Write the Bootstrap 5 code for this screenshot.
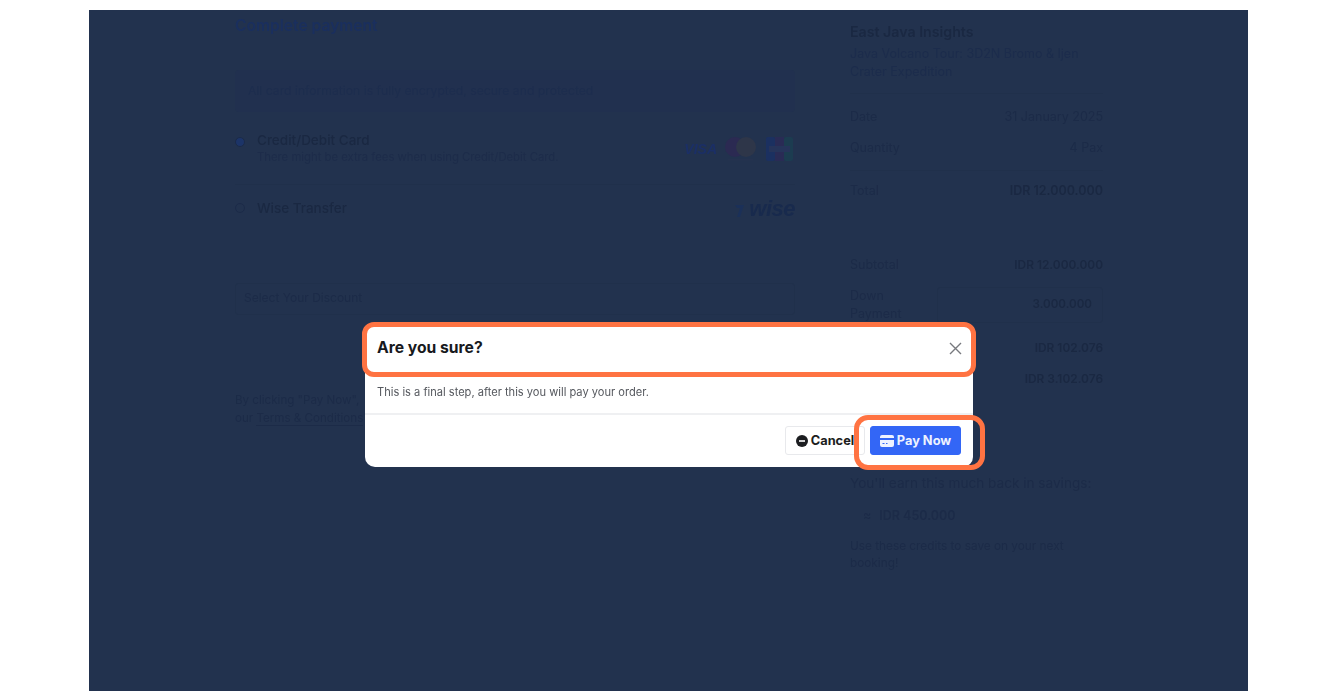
<!DOCTYPE html>
<html lang="en">
<head>
    <meta charset="UTF-8">
    <meta name="viewport" content="width=device-width, initial-scale=1">
    <title>Complete payment</title>
    <link href="https://cdn.jsdelivr.net/npm/bootstrap@5.3.0/dist/css/bootstrap.min.css" rel="stylesheet">
    <style>
        html, body { height: 100%; overflow: hidden; background: #fff; }
        body { font-family: Inter, "Open Sans", sans-serif; }
        .shot-frame {
            position: relative;
            width: 1159px;
            height: 681px;
            margin: 10px 0 0 89px;
            background: #22324e;
            color: #1b2a45;
            padding-left: 146px;
            overflow: hidden;
        }
        .left-col { width: 560px; flex: none; filter: blur(.3px); }
        .right-col { width: 253px; flex: none; margin-left: 55px; font-size: 12.5px; filter: blur(.3px); }
        .pay-title { height: 60px; padding-top: 7px; font-size: 15.6px; font-weight: 600; color: #1a2f5e; line-height: 18px; }
        .secure-note { height: 42px; background: #21304f; border-radius: 4px; padding: 0 13px; font-size: 12.2px; color: #1d2d4e; line-height: 41px; }
        .pay-option { border-bottom: 1px solid #20304b; padding-left: 22px; position: relative; }
        .pay-option.first { height: 73px; padding-top: 19px; }
        .pay-option.second { height: 98px; padding-top: 14px; border-bottom: 0; }
        .pay-dot { position: absolute; left: 0; width: 10px; height: 10px; border-radius: 50%; border: 1px solid #1c2b49; }
        .pay-dot.on { background: #1c3468; top: 25px; }
        .pay-dot.off { top: 18px; }
        .opt-name { font-size: 13.5px; font-weight: 500; line-height: 18px; color: #1a2842; }
        .opt-sub { font-size: 11.3px; line-height: 16px; color: #1d2c4a; }
        .discount-box { height: 32px; border: 1px solid #20304b; border-radius: 3px; padding-left: 8px; font-size: 12px; line-height: 27px; color: #1c2b48; }
        .terms-note { margin-top: 76px; font-size: 11.6px; line-height: 18px; color: #1c2b48; }
        .terms-note span { border-bottom: 1px solid #1c2b48; }
        .card-logos { margin: 6px 2px 0 0; }
        .card-logos svg { flex: none; }
        .visa-text { font-family: "Liberation Sans", sans-serif; font-size: 14px; font-weight: 700; font-style: italic; color: #1b2f66; line-height: 24px; margin-right: 8px; }
        .mc-logo { margin-right: 10px; }
        .wise-text { font-family: "Liberation Sans", sans-serif; font-size: 22px; font-weight: 700; font-style: italic; color: #182a4d; line-height: 20px; letter-spacing: -.5px; }
        .trip-head { padding-top: 13px; height: 84px; border-bottom: 1px solid #20304b; line-height: 18px; color: #1c2c4c; }
        .trip-head div:first-child { font-size: 14.2px; font-weight: 600; line-height: 18px; margin-bottom: 4px; color: #1a2842; }
        .sum-row { line-height: 18px; color: #1c2b48; }
        .sum-row b { font-weight: 600; color: #1a2842; font-size: 11.9px; }
        .date-row { margin-top: 14px; }
        .pay-gap { margin-top: 13px; padding-bottom: 13px; border-bottom: 1px solid #20304b; }
        .total-row { margin-top: 11px; }
        .total-row b { font-size: 12.5px; }
        .subtotal-row { margin-top: 56px; }
        .down-row { margin-top: 13px; height: 36px; }
        .fee-row { margin-top: 16px; }
        .due-row { margin-top: 13px; }
        .down-input { width: 166px; height: 36px; border: 1px solid #20304b; border-radius: 3px; text-align: right; padding: 7px 10px 0 0; flex: none; }
        .down-input b { font-size: 11.6px; }
        .earn-text { color: #1c2b48; line-height: 17px; }
        .earn-top { margin-top: 87px; font-size: 13.6px; white-space: nowrap; }
        .earn-value { margin-top: 15px; padding-left: 13px; }
        .earn-value b { font-weight: 600; }
        .earn-foot { margin-top: 14px; font-size: 11.8px; }
        .confirm-box {
            position: absolute;
            left: 276px;
            top: 316px;
            width: 608px;
            height: 141px;
            border: 0;
            border-radius: 10px;
            background: #fff;
            color: #212529;
            filter: blur(.35px);
        }
        .confirm-box .modal-header { height: 48px; padding: 0 11px 4px 12px; border: 0; }
        .confirm-box .modal-title { font-size: 15.7px; font-weight: 700; color: #17191d; line-height: 20px; }
        .confirm-box .btn-close { display: flex; width: 13px; height: 13px; padding: 0; margin: 0; background: none; opacity: 1; }
        .confirm-box .modal-body { height: 41px; flex: none; padding: 9px 12px 0; font-size: 11.1px; line-height: 18px; color: #55585e; border-bottom: 2px solid #eff0f2; }
        .confirm-box .modal-footer { height: 52px; padding: 11px 12px 0 0; border: 0; gap: 5px; flex-wrap: nowrap; align-items: flex-start; }
        .confirm-box .modal-footer > * { margin: 0; }
        .cancel-btn, .paynow-btn { height: 29px; font-size: 12.8px; font-weight: 700; padding: 0; border-radius: 3px; display: flex; align-items: center; justify-content: center; gap: 3px; }
        .cancel-btn { width: 80px; background: #fff; border: 1px solid #e8e9ec; color: #1c1d20; }
        .paynow-btn { width: 91px; background: #3366f6; border: 1px solid #3366f6; color: #eef2ff; }
        .mark-ring { position: absolute; border: 5px solid #ff7342; pointer-events: none; }
        .mark-top { left: 273px; top: 312px; width: 614px; height: 55px; border-radius: 12px; }
        .mark-pay { left: 765px; top: 405px; width: 131px; height: 55px; border-radius: 14px; }
    </style>
</head>
<body>
    <div class="shot-frame d-flex">
        <div class="left-col">
            <div class="pay-title">Complete payment</div>
            <div class="secure-note">All card information is fully encrypted, secure and protected</div>

            <div class="pay-option first d-flex justify-content-between">
                <span class="pay-dot on"></span>
                <div>
                    <div class="opt-name">Credit/Debit Card</div>
                    <div class="opt-sub">There might be extra fees when using Credit/Debit Card.</div>
                </div>
                <div class="card-logos d-flex align-items-start">
                    <span class="visa-text">VISA</span>
                    <svg class="mc-logo" width="31" height="24" viewBox="0 0 31 24">
                        <circle cx="10" cy="10" r="10" fill="#2b2a52"/>
                        <circle cx="21" cy="10" r="10" fill="#2e3649"/>
                        <rect x="3" y="22" width="25" height="1.5" fill="#25324f"/>
                    </svg>
                    <svg width="27" height="24" viewBox="0 0 27 24">
                        <rect width="9" height="24" rx="2" fill="#1b3060"/>
                        <rect x="9" width="9" height="24" fill="#292b55"/>
                        <rect x="18" width="9" height="24" rx="2" fill="#1c3c50"/>
                        <rect x="3" y="9" width="21" height="6" fill="#26345a"/>
                    </svg>
                </div>
            </div>

            <div class="pay-option second d-flex justify-content-between">
                <span class="pay-dot off"></span>
                <div class="opt-name">Wise Transfer</div>
                <div class="d-flex align-items-start gap-1">
                    <svg width="11" height="15" viewBox="0 0 11 15" class="mt-1"><path d="M1 2h9L6 14H3l3-9H3z" fill="#1b3058"/></svg>
                    <span class="wise-text">wise</span>
                </div>
            </div>

            <div class="discount-box">Select Your Discount</div>
            <div class="terms-note">By clicking "Pay Now",<br>our <span>Terms &amp; Conditions</span></div>
        </div>

        <div class="right-col">
            <div class="trip-head">
                <div>East Java Insights</div>
                Java Volcano Tour: 3D2N Bromo &amp; Ijen<br>Crater Expedition
            </div>
            <div class="sum-row d-flex justify-content-between date-row"><span>Date</span><span>31 January 2025</span></div>
            <div class="sum-row d-flex justify-content-between pay-gap"><span>Quantity</span><span>4 Pax</span></div>
            <div class="sum-row d-flex justify-content-between total-row"><span>Total</span><b>IDR 12.000.000</b></div>
            <div class="sum-row d-flex justify-content-between subtotal-row"><span>Subtotal</span><b>IDR 12.000.000</b></div>
            <div class="sum-row d-flex justify-content-between down-row">
                <span>Down Payment</span>
                <div class="down-input"><b>3.000.000</b></div>
            </div>
            <div class="sum-row d-flex justify-content-end fee-row"><b>IDR 102.076</b></div>
            <div class="sum-row d-flex justify-content-end due-row"><b>IDR 3.102.076</b></div>
            <div class="earn-text earn-top">You'll earn this much back in savings:</div>
            <div class="earn-text earn-value d-flex gap-2"><span>≈</span><b>IDR 450.000</b></div>
            <div class="earn-text earn-foot">Use these credits to save on your next booking!</div>
        </div>

        <div class="modal-content confirm-box">
            <div class="modal-header">
                <h5 class="modal-title">Are you sure?</h5>
                <button type="button" class="btn-close" aria-label="Close">
                    <svg width="13" height="13" viewBox="0 0 13 13"><path d="M1 1l11 11M12 1L1 12" stroke="#77797e" stroke-width="1.4" fill="none"/></svg>
                </button>
            </div>
            <div class="modal-body">This is a final step, after this you will pay your order.</div>
            <div class="modal-footer">
                <button type="button" class="btn cancel-btn">
                    <svg width="12" height="12" viewBox="0 0 12 12"><circle cx="6" cy="6" r="6" fill="#1c1d20"/><rect x="3" y="5.2" width="6" height="1.6" fill="#fff"/></svg>
                    Cancel
                </button>
                <button type="button" class="btn paynow-btn">
                    <svg width="14" height="12" viewBox="0 0 14 12"><path d="M2 0h10a2 2 0 0 1 2 2v1H0V2a2 2 0 0 1 2-2zM0 5h14v5a2 2 0 0 1-2 2H2a2 2 0 0 1-2-2z" fill="#eef2ff"/><path d="M2.5 8.5h2M6 8.500h1.500" stroke="#3366f6" stroke-width="1"/></svg>
                    Pay Now
                </button>
            </div>
        </div>
        <div class="mark-ring mark-top"></div>
        <div class="mark-ring mark-pay"></div>
    </div>
    <script src="https://cdn.jsdelivr.net/npm/bootstrap@5.3.0/dist/js/bootstrap.bundle.min.js"></script>
</body>
</html>
